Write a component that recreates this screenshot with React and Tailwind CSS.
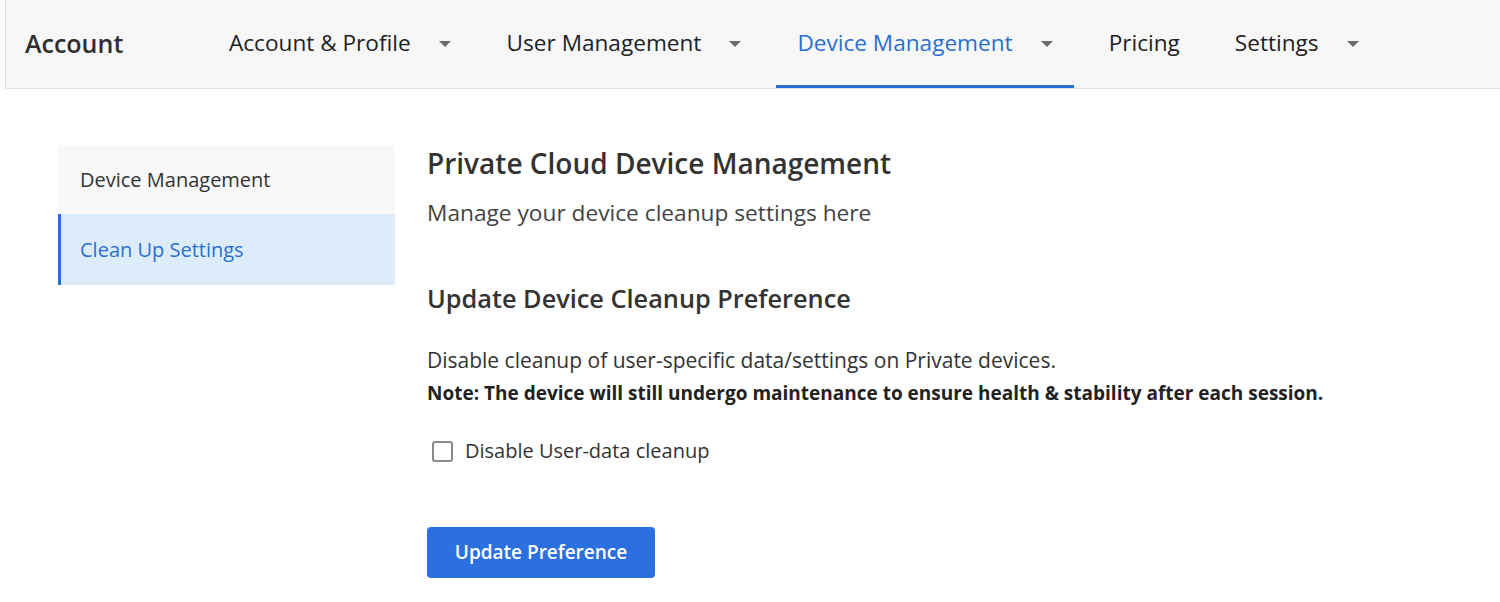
import React, { useState } from "react";

const Caret = () => (
  <svg width="14" height="8" viewBox="0 0 14 8" className="ml-[27px] mt-0.5">
    <path d="M1 1 L13 1 L7 7 Z" fill="#6b6b6b" />
  </svg>
);

const App = () => {
  const [disabled, setDisabled] = useState(false);

  const tabs = [
    { label: "Account & Profile", caret: true },
    { label: "User Management", caret: true },
    { label: "Device Management", caret: true, active: true },
    { label: "Pricing", caret: false },
    { label: "Settings", caret: true },
  ];

  return (
    <div
      className="w-[1500px] h-[602px] bg-white overflow-hidden text-[#2b2b2b]"
      style={{ fontFamily: "'Open Sans', Lato, sans-serif" }}
    >
      {/* TOP NAV */}
      <div className="h-[89px] bg-[#f7f7f7] border-b border-[#e3e3e3] border-l border-l-[#dedede] ml-[5px] flex items-stretch">
        <div className="pl-[19px] w-[202px] flex items-center text-[25px] font-semibold text-[#2f2f2f]">
          Account
        </div>
        <div className="flex items-stretch gap-[14px]">
          {tabs.map((tab, idx) => (
            <div
              key={idx}
              className={`flex items-center pl-[21px] pr-[20px] text-[22.6px] border-b-[3px] ${
                tab.active
                  ? "border-[#2a6fd0] text-[#2a6fd0]"
                  : "border-transparent text-[#222]"
              }`}
            >
              <span>{tab.label}</span>
              {tab.caret && <Caret />}
            </div>
          ))}
        </div>
      </div>

      {/* BODY */}
      <div className="flex pt-[56px] pl-[58px]">
        {/* SIDEBAR */}
        <div className="w-[337px] shrink-0">
          <div className="h-[69px] bg-[#f8f8f8] rounded-t-[4px] flex items-center pl-[22px] text-[20px] text-[#333]">
            Device Management
          </div>
          <div className="h-[71px] bg-[#dcecfb] border-l-[3px] border-[#2a6fd0] flex items-center pl-[19px] text-[20px] text-[#2a6fd0]">
            Clean Up Settings
          </div>
        </div>

        {/* MAIN */}
        <div className="pl-[32px]">
          <h1 className="text-[28px] font-semibold text-[#333] leading-[36px]">
            Private Cloud Device Management
          </h1>
          <p className="text-[22.7px] text-[#444] mt-[17px] leading-[30px]">
            Manage your device cleanup settings here
          </p>

          <h2 className="text-[25.3px] font-semibold text-[#333] mt-[54px] leading-[32px]">
            Update Device Cleanup Preference
          </h2>
          <p className="text-[21px] text-[#333] mt-[31px] leading-[30px]">
            Disable cleanup of user-specific data/settings on Private devices.
          </p>
          <p className="text-[19px] font-bold text-[#222] mt-[5px] leading-[26px]">
            Note: The device will still undergo maintenance to ensure health &amp; stability after each session.
          </p>

          <label className="flex items-center h-[30px] mt-[30px] cursor-pointer">
            <span
              onClick={() => setDisabled(!disabled)}
              className={`w-[21px] h-[21px] rounded-[3px] border-2 border-[#8a8a8a] ml-[5px] mr-[12px] flex items-center justify-center ${
                disabled ? "bg-[#2c6fdf] border-[#2c6fdf]" : "bg-white"
              }`}
            >
              {disabled && (
                <svg width="12" height="10" viewBox="0 0 12 10">
                  <path d="M1 5 L4.5 8.5 L11 1.5" stroke="white" strokeWidth="2" fill="none" />
                </svg>
              )}
            </span>
            <span className="text-[20px] text-[#333]">Disable User-data cleanup</span>
          </label>

          <button className="mt-[61px] w-[228px] h-[51px] bg-[#2c6fdf] rounded-[4px] text-white text-[19px] font-semibold">
            Update Preference
          </button>
        </div>
      </div>
    </div>
  );
};

export default App;
